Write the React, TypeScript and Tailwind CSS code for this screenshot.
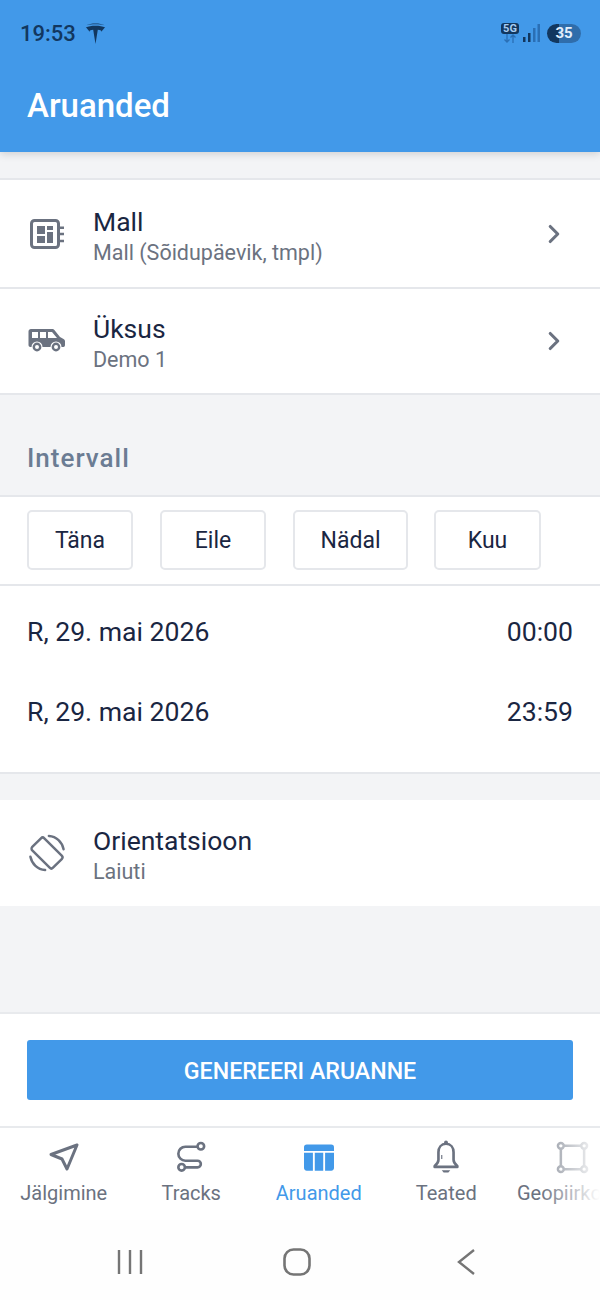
import { ChevronRight } from "lucide-react";

const font = { fontFamily: "Roboto, sans-serif" };

function TemplateIcon() {
  return (
    <svg width="34" height="30" viewBox="0 0 34 30" fill="none" className="ml-[3px]">
      <rect x="1.500" y="1.500" width="27" height="27" rx="3" stroke="#6b7280" strokeWidth="3" />
      <path d="M7 7h8v8H7zM17 7h6v4h-6zM17 13h6v11h-6zM7 17h8v7H7z" fill="#6b7280" />
      <path d="M30 8.700h4M30 15h4M30 22h4" stroke="#6b7280" strokeWidth="2.400" />
    </svg>
  );
}

function VanIcon() {
  return (
    <svg width="38" height="24" viewBox="0 0 38 24" fill="none" className="ml-[1px]">
      <path
        d="M3 0h21c1 0 2 .5 2.600 1.300L32 8l3.500 2c1 .5 1.500 1.500 1.500 2.500V16c0 1-.7 2-1.500 2H2.500C1.200 18 .5 17 .5 16V2.500C.5 1 1.500 0 3 0z"
        fill="#6b7280"
      />
      <path d="M4 3h6v6H4zM12 3h6v6h-6zM20 3h4l5 6h-9z" fill="#fff" />
      <circle cx="9" cy="18" r="5.500" fill="#fff" />
      <circle cx="9" cy="18" r="3.200" fill="#fff" stroke="#6b7280" strokeWidth="2.400" />
      <circle cx="28" cy="18" r="5.500" fill="#fff" />
      <circle cx="28" cy="18" r="3.200" fill="#fff" stroke="#6b7280" strokeWidth="2.400" />
    </svg>
  );
}

function RotateIcon() {
  return (
    <svg width="36" height="38" viewBox="0 0 38 38" fill="none" stroke="#6b7280" strokeWidth="2.600" className="ml-[2px]">
      <rect x="10" y="3.500" width="18" height="31" rx="2.500" transform="rotate(-45 19 19)" />
      <path d="M21 1c8 .5 14 6.500 15.500 14M17 37C9 36.500 3 30.500 1.500 23" strokeLinecap="round" />
    </svg>
  );
}

function NavigateIcon() {
  return (
    <svg width="32" height="30" viewBox="0 0 32 30" fill="none">
      <path d="M29 3 3 12.500l11 4.500 5 10z" stroke="#6b7280" strokeWidth="3" strokeLinejoin="round" />
    </svg>
  );
}

function TracksIcon() {
  return (
    <svg width="30" height="32" viewBox="0 0 32 34" fill="none" stroke="#6b7280" strokeWidth="2.800">
      <circle cx="26.500" cy="5.500" r="3.500" />
      <circle cx="6" cy="28" r="3.500" />
      <path d="M23 6H10a7.500 7.500 0 0 0 0 15h13a3.500 3.500 0 0 1 0 7H9.500" />
    </svg>
  );
}

function TableIcon() {
  return (
    <svg width="30" height="27" viewBox="0 0 32 28" fill="#4299e9">
      <path d="M3 0h26a3 3 0 0 1 3 3v4H0V3a3 3 0 0 1 3-3z" />
      <path d="M0 9h9.500v19H3a3 3 0 0 1-3-3zM11.500 9h9v19h-9zM22.500 9H32v16a3 3 0 0 1-3 3h-6.500z" />
    </svg>
  );
}

function BellIcon() {
  return (
    <svg width="28" height="34" viewBox="0 0 28 36" fill="none">
      <circle cx="14" cy="2.500" r="2" fill="#6b7280" />
      <path
        d="M14 4c-5 0-8 4-8 9v8c0 3-2 5-4 6.500v1h24v-1c-2-1.500-4-3.500-4-6.500v-8c0-5-3-9-8-9z"
        stroke="#6b7280"
        strokeWidth="2.800"
        strokeLinejoin="round"
      />
      <path d="M9.500 32h9l-2 2.500h-5z" fill="#6b7280" />
      <path d="M9.500 16v4" stroke="#6b7280" strokeWidth="1.200" />
    </svg>
  );
}

function GeofenceIcon() {
  return (
    <svg width="33" height="33" viewBox="0 0 34 34" fill="none" stroke="#8b919c" strokeWidth="2.600" className="-ml-[2px]">
      <path d="M8 5h18M29 8v18M26 29H8M5 26V8" />
      <circle cx="5" cy="5" r="3" />
      <circle cx="29" cy="5" r="3" />
      <circle cx="5" cy="29" r="3" />
      <circle cx="29" cy="29" r="3" />
    </svg>
  );
}

function TeslaIcon() {
  return (
    <svg width="21" height="21" viewBox="0 0 20 20" fill="#12375f">
      <path d="M10 20 7.800 6.500C5.500 6.600 4.600 7 4.200 8.400 3.400 6.800 2 5.200.8 4.300 3 3 6.400 2.600 10 2.600s7 .4 9.200 1.700c-1.200.9-2.600 2.500-3.400 4.100-.4-1.400-1.300-1.800-3.600-1.900z" />
      <path d="M1 2.300C3.500 1 6.500.5 10 .5s6.500.5 9 1.800c-2.700-.8-5.700-1.100-9-1.100s-6.300.3-9 1.100z" />
    </svg>
  );
}

function StatusBar() {
  return (
    <div className="flex h-[66px] items-center justify-between pl-5 pr-[19px]">
      <div className="flex items-center gap-[9px]">
        <span className="text-[22px] font-medium text-[#12375f]">19:53</span>
        <TeslaIcon />
      </div>
      <div className="flex items-center gap-[3px]">
        <div className="flex w-[18px] flex-col items-center">
          <span className="w-[18px] rounded-[3px] bg-[#12375f] text-center text-[11px] font-bold leading-[11px] text-[#a8cdf2]">5G</span>
          <svg width="16" height="9" viewBox="0 0 16 9" fill="none" stroke="#2a6fb5" strokeWidth="1.300">
            <path d="M5 0v8M2.500 5.500 5 8l2.500-2.500M11 9V1M8.500 3.500 11 1l2.500 2.500" />
          </svg>
        </div>
        <svg width="18" height="20" viewBox="0 0 18 20">
          <rect x="1" y="14" width="2.500" height="5" fill="#12375f" />
          <rect x="6" y="10" width="2.500" height="9" fill="#12375f" />
          <rect x="11" y="5" width="2.500" height="14" fill="#2a6fb5" />
          <rect x="15.500" y="1" width="2.500" height="18" fill="#2a6fb5" />
        </svg>
        <div className="ml-[4px] flex h-[19px] w-[34px] items-center justify-center rounded-full bg-[linear-gradient(90deg,#12375f_0%,#12375f_35%,#2f6dab_35%,#2f6dab_100%)]">
          <span className="text-[15px] font-bold text-[#e3effb]">35</span>
        </div>
      </div>
    </div>
  );
}

function SelectRow({ icon, title, sub, chevron = true, h = "h-[107px]" }: { icon: React.ReactNode; title: string; sub: string; chevron?: boolean; h?: string }) {
  return (
    <div className={`flex ${h} items-center bg-white pl-[27px] pr-[31px]`}>
      <div className="flex w-[66px] items-center">{icon}</div>
      <div className="mt-[6px] flex-1">
        <div className="text-[26.500px] leading-[32px] text-[#1a2642]">{title}</div>
        <div className="text-[21.500px] leading-[30px] text-[#6b7280]">{sub}</div>
      </div>
      {chevron && <ChevronRight size={30} strokeWidth={2.500} className="text-[#6b7280]" />}
    </div>
  );
}

function RangeButton({ label, w, className = "" }: { label: string; w: string; className?: string }) {
  return (
    <div className={`flex h-[60px] ${w} ${className} items-center justify-center rounded-[5px] border-2 border-[#e5e7eb] pt-[3px] text-[23px] text-[#1a2642]`}>
      {label}
    </div>
  );
}

function DateRow({ date, time }: { date: string; time: string }) {
  return (
    <div className="flex h-[80px] items-center justify-between px-[27px] text-[26.600px] text-[#1a2642]">
      <span>{date}</span>
      <span>{time}</span>
    </div>
  );
}

function Tab({ icon, label, active, offset }: { icon: React.ReactNode; label: string; active?: boolean; offset?: string }) {
  return (
    <div className="flex w-[127.500px] shrink-0 flex-col items-center">
      <div className="flex h-[42px] items-center">{icon}</div>
      <span className={`mt-[1px] whitespace-nowrap text-[20px] leading-[28px] ${offset ?? ""} ${active ? "text-[#4299e9]" : "text-[#6b7280]"}`}>{label}</span>
    </div>
  );
}

export default function App() {
  return (
    <div style={font} className="flex h-[1300px] w-[600px] flex-col overflow-hidden bg-[#f3f4f6]">
      <header className="relative h-[152px] bg-[#4299e9] shadow-[0_2px_8px_rgba(0,0,0,0.15)]">
        <StatusBar />
        <h1 className="mt-[18px] pl-[27px] text-[33px] font-medium leading-[44px] text-white">Aruanded</h1>
      </header>

      <div className="h-[26px] bg-[#f3f4f6]" />
      <section className="border-y-2 border-[#e5e7eb] bg-white">
        <SelectRow icon={<TemplateIcon />} title="Mall" sub="Mall (Sõidupäevik, tmpl)" />
        <div className="h-[2px] bg-[#e5e7eb]" />
        <SelectRow icon={<VanIcon />} title="Üksus" sub="Demo 1" h="h-[104px]" />
      </section>

      <div className="flex h-[100px] items-center pl-[27px] pt-[27px] text-[26px] font-medium tracking-[1px] text-[#6b7c93]">Intervall</div>

      <section className="border-y-2 border-[#e5e7eb] bg-white">
        <div className="flex h-[87px] items-center gap-[27px] pb-[2px] pl-[27px]">
          <RangeButton label="Täna" w="w-[106px]" />
          <RangeButton label="Eile" w="w-[106px]" />
          <RangeButton label="Nädal" w="w-[115px]" />
          <RangeButton label="Kuu" w="w-[107px]" className="-ml-[1px]" />
        </div>
      </section>
      <section className="border-b-2 border-[#e5e7eb] bg-white pt-[6px] pb-[20px]">
        <DateRow date="R, 29. mai 2026" time="00:00" />
        <DateRow date="R, 29. mai 2026" time="23:59" />
      </section>

      <div className="h-[26px]" />
      <SelectRow icon={<RotateIcon />} title="Orientatsioon" sub="Laiuti" chevron={false} h="h-[106px]" />
      <div className="h-[106px]" />

      <section className="flex h-[116px] items-start border-y-2 border-[#e8eaed] bg-white px-[27px] pt-[26px]">
        <button className="h-[60px] w-full rounded-[3px] bg-[#4299e9] pt-[2px] text-[23.200px] font-medium text-white">GENEREERI ARUANNE</button>
      </section>

      <nav className="relative flex h-[92px] overflow-hidden bg-white pt-[8px]">
        <Tab icon={<NavigateIcon />} label="Jälgimine" />
        <Tab icon={<TracksIcon />} label="Tracks" />
        <Tab icon={<TableIcon />} label="Aruanded" active />
        <Tab icon={<BellIcon />} label="Teated" />
        <Tab icon={<GeofenceIcon />} label="Geopiirkonnad" offset="self-start pl-[7px]" />
        <div className="absolute bottom-0 right-0 top-0 w-[60px] bg-gradient-to-r from-white/0 to-white" />
      </nav>

      <div className="flex h-[80px] items-center bg-[#fefefe] pt-[4px]">
        <div className="flex items-center pl-[117px]">
          <svg width="26" height="26" viewBox="0 0 26 26" stroke="#757575" strokeWidth="2.400">
            <path d="M2 1v24M13 1v24M24 1v24" />
          </svg>
          <svg width="28" height="28" viewBox="0 0 28 28" fill="none" stroke="#757575" strokeWidth="2.600" className="ml-[140px]">
            <rect x="1.500" y="1.500" width="25" height="25" rx="9" />
          </svg>
          <svg width="18" height="28" viewBox="0 0 18 28" fill="none" stroke="#757575" strokeWidth="2.400" className="ml-[146px]">
            <path d="M17 2 2 14l15 12" />
          </svg>
        </div>
      </div>
    </div>
  );
}
